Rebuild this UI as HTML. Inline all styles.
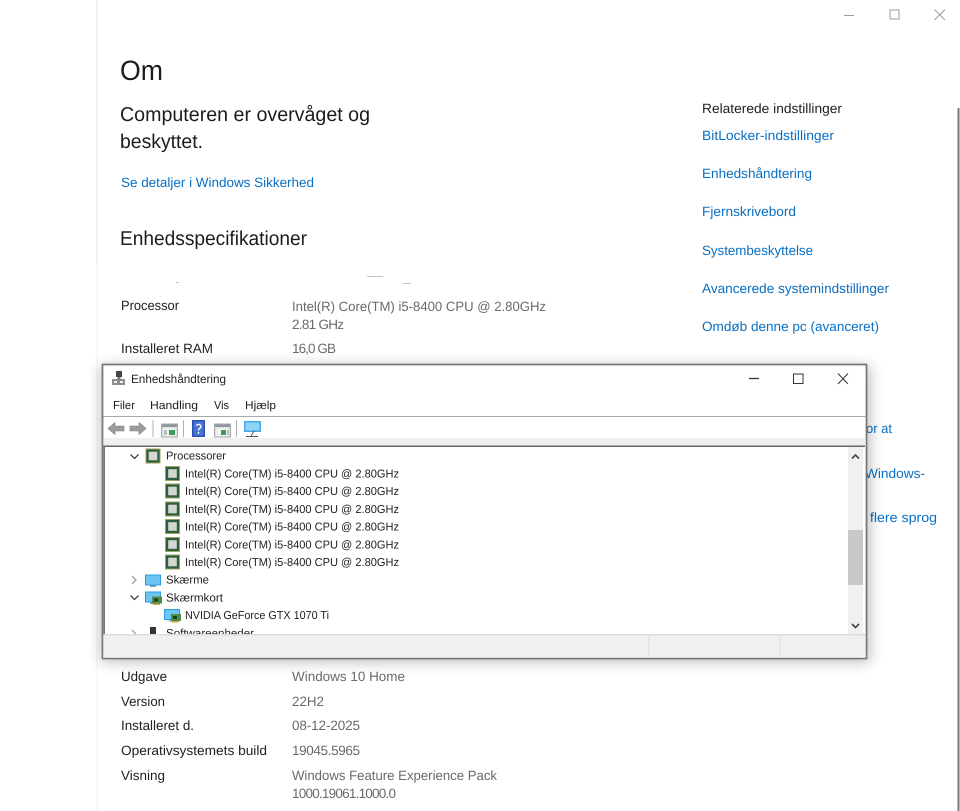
<!DOCTYPE html>
<html lang="da"><head><meta charset="utf-8"><title>Om</title>
<style>html,body{margin:0;padding:0;background:#fff;width:960px;height:811px;overflow:hidden}svg{display:block}text{font-family:"Liberation Sans",sans-serif;text-rendering:geometricPrecision}
.l{font-size:13.5px;fill:#0b6fc2}.k{font-size:13.5px;fill:#222}.v{font-size:13.5px;fill:#6a6a6a}.t{font-size:11.5px;fill:#222}.m{font-size:11.5px;fill:#1a1a1a}</style></head>
<body>
<svg width="960" height="811" viewBox="0 0 960 811" xmlns="http://www.w3.org/2000/svg">
<defs>
<filter id="sh" x="-5%" y="-10%" width="110%" height="125%"><feGaussianBlur stdDeviation="7"/></filter>
<g id="cpu"><rect x="0" y="0" width="15" height="15" fill="#9aa55f"/><rect x="1" y="1" width="13" height="13" fill="#2f5d3c"/><rect x="3.2" y="3.2" width="8.6" height="8.6" fill="#d4d6d2"/></g>
<g id="mon"><rect x="0" y="0" width="16" height="11" fill="#2e9be0"/><rect x="1" y="1" width="14" height="9" fill="#6cc6f5"/><rect x="5" y="11" width="6" height="1.5" fill="#8a9aa6"/></g>
<g id="gpu"><use href="#mon"/><rect x="7" y="5" width="10" height="7" fill="#4d8a4a"/><rect x="9" y="7" width="4" height="3" fill="#1d3f22"/><rect x="8" y="12" width="7" height="1.5" fill="#c9a83a"/></g>
<g id="win"><rect x="0.5" y="0.5" width="16" height="13" fill="#dfe3e6" stroke="#a4abb0"/><rect x="1" y="1" width="15" height="2.5" fill="#8f979d"/><rect x="2.5" y="5" width="12" height="7.5" fill="#f5f7f7"/></g>
</defs>

<rect width="960" height="811" fill="#fff"/>
<rect x="96.5" y="0" width="1" height="264" fill="#e3e3e3"/>
<rect x="96.5" y="264" width="1" height="547" fill="#f1f1f1"/>
<rect x="957.5" y="108" width="2" height="703" fill="#777"/>
<rect x="953" y="108" width="1" height="703" fill="#f6f6f6"/>

<g fill="none" stroke="#9c9c9c" stroke-width="1">
<path d="M844 15.5H854"/><rect x="890" y="10" width="9" height="9"/><path d="M934.5 9.5L945 20M945 9.5L934.5 20"/>
</g>

<text x="120" y="80" font-size="28" fill="#1c1c1c" textLength="43" lengthAdjust="spacingAndGlyphs">Om</text>
<text x="120" y="121" font-size="20" fill="#1c1c1c" textLength="250" lengthAdjust="spacingAndGlyphs">Computeren er overvåget og</text>
<text x="120" y="148" font-size="20" fill="#1c1c1c" textLength="83" lengthAdjust="spacingAndGlyphs">beskyttet.</text>
<text x="121" y="187" class="l" textLength="193" lengthAdjust="spacingAndGlyphs">Se detaljer i Windows Sikkerhed</text>
<text x="120" y="245" font-size="20" fill="#1c1c1c" textLength="187" lengthAdjust="spacingAndGlyphs">Enhedsspecifikationer</text>

<g fill="#c4c4c4"><rect x="176" y="282" width="3" height="1"/><rect x="367" y="276" width="16" height="1"/><rect x="403" y="283" width="8" height="1"/></g>

<text x="121" y="310" class="k" textLength="58" lengthAdjust="spacingAndGlyphs">Processor</text>
<text x="292" y="311" class="v" textLength="254" lengthAdjust="spacingAndGlyphs">Intel(R) Core(TM) i5-8400 CPU @ 2.80GHz</text>
<text x="292" y="329" class="v" textLength="52" lengthAdjust="spacing">2.81 GHz</text>
<text x="121" y="353" class="k" textLength="92" lengthAdjust="spacingAndGlyphs">Installeret RAM</text>
<text x="292" y="353" class="v" textLength="44" lengthAdjust="spacing">16,0 GB</text>

<text x="702" y="113" class="k" fill="#111" textLength="140" lengthAdjust="spacingAndGlyphs">Relaterede indstillinger</text>
<text x="702" y="140" class="l" textLength="132" lengthAdjust="spacingAndGlyphs">BitLocker-indstillinger</text>
<text x="702" y="178" class="l" textLength="110" lengthAdjust="spacingAndGlyphs">Enhedshåndtering</text>
<text x="702" y="216" class="l" textLength="94" lengthAdjust="spacingAndGlyphs">Fjernskrivebord</text>
<text x="702" y="255" class="l" textLength="111" lengthAdjust="spacingAndGlyphs">Systembeskyttelse</text>
<text x="702" y="293" class="l" textLength="187" lengthAdjust="spacingAndGlyphs">Avancerede systemindstillinger</text>
<text x="702" y="331" class="l" textLength="177" lengthAdjust="spacingAndGlyphs">Omdøb denne pc (avanceret)</text>
<text x="866" y="433" class="l" textLength="26" lengthAdjust="spacingAndGlyphs">or at</text>
<text x="865" y="478" class="l" textLength="60" lengthAdjust="spacingAndGlyphs">Windows-</text>
<text x="862" y="522" class="l" textLength="75" lengthAdjust="spacingAndGlyphs">f flere sprog</text>

<text x="121" y="681" class="k" textLength="46" lengthAdjust="spacingAndGlyphs">Udgave</text>
<text x="292" y="681" class="v" textLength="113" lengthAdjust="spacingAndGlyphs">Windows 10 Home</text>
<text x="121" y="706" class="k" textLength="44" lengthAdjust="spacingAndGlyphs">Version</text>
<text x="292" y="706" class="v" textLength="32" lengthAdjust="spacingAndGlyphs">22H2</text>
<text x="121" y="730" class="k" textLength="73" lengthAdjust="spacingAndGlyphs">Installeret d.</text>
<text x="292" y="730" class="v" textLength="68" lengthAdjust="spacing">08-12-2025</text>
<text x="121" y="755" class="k" textLength="146" lengthAdjust="spacingAndGlyphs">Operativsystemets build</text>
<text x="292" y="755" class="v" textLength="68" lengthAdjust="spacing">19045.5965</text>
<text x="121" y="780" class="k" textLength="44" lengthAdjust="spacingAndGlyphs">Visning</text>
<text x="292" y="780" class="v" textLength="205" lengthAdjust="spacingAndGlyphs">Windows Feature Experience Pack</text>
<text x="292" y="798" class="v" textLength="104" lengthAdjust="spacing">1000.19061.1000.0</text>

<!-- window shadow -->
<rect x="101" y="366" width="769" height="296" fill="#000" opacity=".26" filter="url(#sh)"/>
<!-- window -->
<rect x="102.5" y="364.5" width="764" height="294" fill="#fff" stroke="#777" stroke-width="1.5"/>
<!-- title icon -->
<g><rect x="116" y="371" width="6" height="6" fill="#444"/><rect x="112" y="379" width="13" height="6" fill="#8d8d8d"/><rect x="117.5" y="377" width="3" height="3" fill="#777"/><rect x="114" y="381" width="3" height="2" fill="#eee"/><rect x="120" y="381" width="3" height="2" fill="#eee"/></g>
<text x="131" y="383" font-size="12" fill="#222" textLength="95" lengthAdjust="spacingAndGlyphs">Enhedshåndtering</text>
<g fill="none" stroke="#333" stroke-width="1"><path d="M749 378.5H759" stroke-width="1.3"/><rect x="793.5" y="374" width="9.5" height="9.5"/><path d="M838 373.5L848 384M848 373.5L838 384"/></g>

<text x="113" y="409" class="m" textLength="22" lengthAdjust="spacingAndGlyphs">Filer</text>
<text x="150" y="409" class="m" textLength="48" lengthAdjust="spacingAndGlyphs">Handling</text>
<text x="214" y="409" class="m" textLength="15" lengthAdjust="spacingAndGlyphs">Vis</text>
<text x="245" y="409" class="m" textLength="31" lengthAdjust="spacingAndGlyphs">Hjælp</text>
<rect x="103" y="416" width="763" height="1" fill="#a8a8a8"/>

<!-- toolbar -->
<path d="M108 428.5L115 422.5V426H124V431H115V434.5Z" fill="#9c9c9c" stroke="#808080" stroke-width=".6"/>
<path d="M146 428.5L139 422.5V426H130V431H139V434.5Z" fill="#9c9c9c" stroke="#808080" stroke-width=".6"/>
<rect x="152.5" y="420" width="1" height="17" fill="#b0b0b0"/>
<use href="#win" x="161" y="423.5"/><rect x="169" y="430" width="6" height="5" fill="#3f9a55"/><rect x="164" y="430" width="3" height="5" fill="#b5bcc0"/>
<rect x="183" y="420" width="1" height="17" fill="#b0b0b0"/>
<rect x="192" y="420" width="13" height="17" fill="#2e50b0"/><rect x="193.5" y="421.5" width="10" height="14" fill="#4a74d6"/>
<path d="M196.3 425.5q2.2-2.4 4.4 0q.6 2-1.5 3.2q-.8.6-.7 1.8M198.5 432v1.8" fill="none" stroke="#fff" stroke-width="1.4"/>
<use href="#win" x="214" y="423.5"/><rect x="221" y="430" width="5" height="5" fill="#3f9a55"/><rect x="227" y="430" width="2" height="5" fill="#b5bcc0"/>
<rect x="236" y="420" width="1" height="17" fill="#b0b0b0"/>
<rect x="244" y="421" width="17" height="11" fill="#46a8e4"/><rect x="245.5" y="422.5" width="14" height="8" fill="#8fd4f5"/>
<path d="M254 431L251 436M246 436.5H258" stroke="#555" stroke-width="1" fill="none"/>

<rect x="103" y="438" width="763" height="8" fill="#f0f0f0"/>
<!-- tree frame -->
<rect x="103" y="445.5" width="762" height="1.5" fill="#666"/>
<rect x="103.5" y="446" width="1.5" height="189" fill="#777"/>
<rect x="105" y="447" width="743" height="188" fill="#fff"/>
<rect x="848" y="447" width="15" height="188" fill="#f0f0f0"/>
<rect x="848" y="530" width="15" height="55" fill="#c8c8c8"/>
<g fill="none" stroke="#444" stroke-width="1.6"><path d="M852 458.5L855.5 455L859 458.5"/><path d="M852 624L855.5 627.5L859 624"/></g>

<!-- tree -->
<g fill="none" stroke="#444" stroke-width="1.3"><path d="M130.5 454.5L134.5 458.5L138.5 454.5"/><path d="M130.5 595.5L134.5 599.5L138.5 595.5"/></g>
<path d="M132 576L136 580L132 584" fill="none" stroke="#a0a0a0" stroke-width="1.3"/>
<use href="#cpu" x="145.5" y="448.5"/>
<text x="166" y="459.5" class="t" textLength="60" lengthAdjust="spacingAndGlyphs">Processorer</text>
<use href="#cpu" x="165" y="466"/><text x="185" y="477.5" class="t" textLength="214" lengthAdjust="spacingAndGlyphs">Intel(R) Core(TM) i5-8400 CPU @ 2.80GHz</text>
<use href="#cpu" x="165" y="483.5"/><text x="185" y="495" class="t" textLength="214" lengthAdjust="spacingAndGlyphs">Intel(R) Core(TM) i5-8400 CPU @ 2.80GHz</text>
<use href="#cpu" x="165" y="501.5"/><text x="185" y="513" class="t" textLength="214" lengthAdjust="spacingAndGlyphs">Intel(R) Core(TM) i5-8400 CPU @ 2.80GHz</text>
<use href="#cpu" x="165" y="519"/><text x="185" y="530.5" class="t" textLength="214" lengthAdjust="spacingAndGlyphs">Intel(R) Core(TM) i5-8400 CPU @ 2.80GHz</text>
<use href="#cpu" x="165" y="537"/><text x="185" y="548.5" class="t" textLength="214" lengthAdjust="spacingAndGlyphs">Intel(R) Core(TM) i5-8400 CPU @ 2.80GHz</text>
<use href="#cpu" x="165" y="554.5"/><text x="185" y="566" class="t" textLength="214" lengthAdjust="spacingAndGlyphs">Intel(R) Core(TM) i5-8400 CPU @ 2.80GHz</text>
<use href="#mon" x="145" y="574.5"/>
<text x="166" y="583.5" class="t" textLength="43" lengthAdjust="spacingAndGlyphs">Skærme</text>
<use href="#gpu" x="145" y="591.5"/>
<text x="166" y="601.5" class="t" textLength="57" lengthAdjust="spacingAndGlyphs">Skærmkort</text>
<use href="#gpu" x="164" y="609"/>
<text x="185" y="619" class="t" textLength="144" lengthAdjust="spacingAndGlyphs">NVIDIA GeForce GTX 1070 Ti</text>
<path d="M132 630L136 634" fill="none" stroke="#a0a0a0" stroke-width="1.3"/>
<rect x="150" y="627" width="6" height="8" fill="#333"/>
<text x="166" y="637" class="t" textLength="88" lengthAdjust="spacingAndGlyphs">Softwareenheder</text>

<!-- status bar -->
<rect x="103" y="634" width="763" height="24" fill="#f0f0f0"/>
<rect x="103" y="634" width="763" height="1.5" fill="#dcdcdc"/>
<rect x="103" y="656.5" width="763" height="1" fill="#fafafa"/>
<rect x="648.5" y="635" width="1" height="22" fill="#dcdcdc"/>
<rect x="779.5" y="635" width="1" height="22" fill="#dcdcdc"/>
<rect x="102.5" y="364.5" width="764" height="294" fill="none" stroke="#777" stroke-width="1.5"/>
</svg>
</body></html>
